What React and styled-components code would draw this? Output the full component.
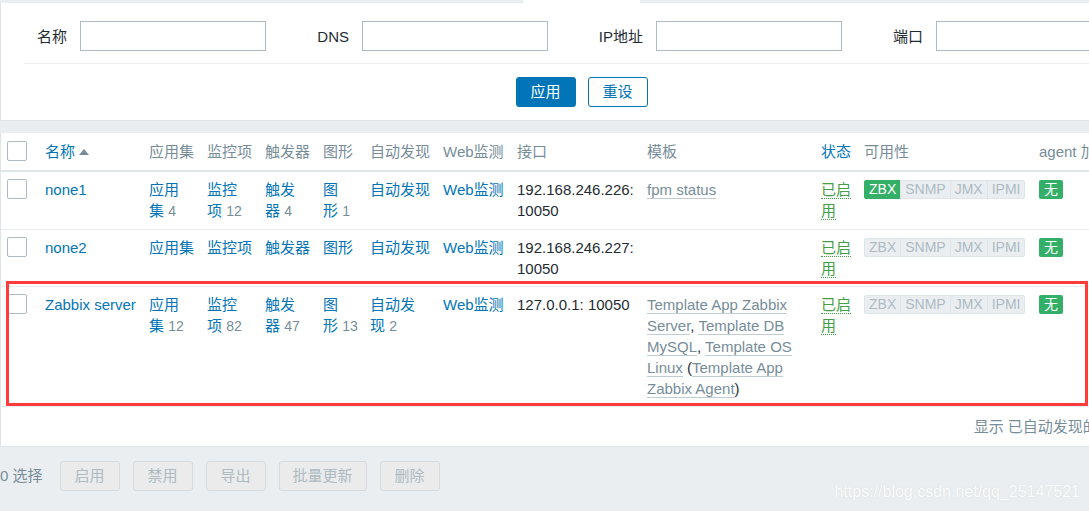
import React from 'react'
import styled, { createGlobalStyle, css } from 'styled-components'

const GlobalStyle = createGlobalStyle`
  html, body {
    margin: 0;
    padding: 0;
    overflow: hidden;
    background: #ebeef0;
  }
  body {
    font-family: "Liberation Sans", Arial, "Noto Sans CJK SC", sans-serif;
    font-size: 15px;
    color: #1f2c33;
  }
`

const BLUE = '#0275b8'
const GREY = '#768d99'
const DARK = '#1f2c33'
const GREEN = '#34af67'

const Page = styled.div`
  width: 1162px;
`

const TopStrip = styled.div`
  display: flex;
  height: 3px;
`

const StripGap = styled.div`
  width: ${(p) => p.$w}px;
`

const ActiveTab = styled.div`
  width: ${(p) => p.$w}px;
  background: #fff;
`

const FilterPanel = styled.div`
  background: #fff;
  border-left: 1px solid #dfe4e7;
  border-bottom: 1px solid #dfe4e7;
`

const FilterRow = styled.div`
  display: flex;
  margin-left: 23px;
  padding: 18px 0 12px;
  border-bottom: 1px solid #ebeef0;
`

const FilterField = styled.div`
  display: flex;
  align-items: center;
  flex: none;
`

const FieldLabel = styled.label`
  width: ${(p) => p.$w}px;
  box-sizing: border-box;
  padding-right: 13px;
  text-align: right;
  line-height: 21px;
  color: ${DARK};
  white-space: nowrap;
`

const TextInput = styled.input`
  width: 186px;
  height: 30px;
  box-sizing: border-box;
  border: 1px solid #acbbc4;
  background: #fff;
  margin: 0;
  padding: 0 6px;
  font: inherit;
`

const ButtonRow = styled.div`
  display: flex;
  justify-content: center;
  gap: 12px;
  padding: 13px 0;
`

const Button = styled.button`
  height: 30px;
  min-width: 60px;
  box-sizing: border-box;
  padding: 0 13px;
  border-radius: 3px;
  font-family: inherit;
  font-size: 15px;
  line-height: 28px;
  ${(p) =>
    p.$variant === 'primary' &&
    css`
      background: ${BLUE};
      border: 1px solid ${BLUE};
      color: #fff;
    `}
  ${(p) =>
    p.$variant === 'alt' &&
    css`
      background: #fff;
      border: 1px solid ${BLUE};
      color: ${BLUE};
    `}
  ${(p) =>
    p.$variant === 'disabled' &&
    css`
      background: #ebebeb;
      border: 1px solid #d5dbdf;
      color: #acbbc4;
    `}
`

const TableCard = styled.div`
  position: relative;
  margin-top: 12px;
  background: #fff;
  border-left: 1px solid #dfe4e7;
  border-bottom: 1px solid #dfe4e7;
`

const Table = styled.table`
  width: 1161px;
  table-layout: fixed;
  border-collapse: collapse;
`

const Col = styled.col`
  width: ${(p) => p.$w}px;
`

const Th = styled.th`
  padding: 8px 8px 8px ${(p) => (p.$first ? 6 : 0)}px;
  border-bottom: 2px solid #dfe4e7;
  font-weight: normal;
  text-align: left;
  vertical-align: top;
  line-height: 21px;
  color: ${(p) => (p.$link ? BLUE : GREY)};
  white-space: nowrap;
  overflow: hidden;
`

const Td = styled.td`
  padding: 7px 8px 7px ${(p) => (p.$first ? 6 : 0)}px;
  border-bottom: 1px solid #ebeef0;
  vertical-align: top;
  line-height: 21px;
  color: ${DARK};
`

const PagingCell = styled.td`
  padding: 9px 5px 9px 0;
  text-align: right;
  line-height: 21px;
  color: ${GREY};
  white-space: nowrap;
`

const SortArrow = styled.span`
  display: inline-block;
  margin-left: 4px;
  width: 0;
  height: 0;
  border-left: 5px solid transparent;
  border-right: 5px solid transparent;
  border-bottom: 6px solid ${GREY};
  vertical-align: 2px;
`

const Checkbox = styled.span`
  display: block;
  width: 20px;
  height: 20px;
  box-sizing: border-box;
  border: 1px solid #acbbc4;
  border-radius: 2px;
  background: #fff;
`

const Link = styled.a`
  color: ${BLUE};
  text-decoration: none;
`

const Count = styled.span`
  color: ${GREY};
  font-size: 14px;
`

const TemplateLink = styled.a`
  color: ${GREY};
  text-decoration: none;
  border-bottom: 1px solid rgba(118, 141, 153, 0.45);
`

const StatusLink = styled.a`
  color: #429e47;
  text-decoration: none;
  border-bottom: 1px dotted #429e47;
`

const Availability = styled.span`
  display: inline-flex;
  margin-top: 1px;
  vertical-align: top;
`

const Badge = styled.span`
  height: 19px;
  box-sizing: border-box;
  padding: 0 4px;
  font-size: 14px;
  line-height: 17px;
  border: 1px solid ${(p) => (p.$on ? GREEN : '#dfe4e7')};
  background: ${(p) => (p.$on ? GREEN : '#ebeef0')};
  color: ${(p) => (p.$on ? '#fff' : '#acbbc4')};
  & + & {
    margin-left: -1px;
  }
  &:first-child {
    border-radius: 2px 0 0 2px;
  }
  &:last-child {
    border-radius: 0 2px 2px 0;
  }
`

const EncBadge = styled.span`
  display: inline-block;
  margin-top: 1px;
  height: 19px;
  box-sizing: border-box;
  padding: 0 5px;
  border-radius: 2px;
  background: ${GREEN};
  color: #fff;
  font-size: 14px;
  line-height: 19px;
  vertical-align: top;
`

const Annotation = styled.div`
  position: absolute;
  left: 5px;
  top: 148px;
  width: 1082px;
  height: 125px;
  box-sizing: border-box;
  border: 3px solid #ff3b3b;
  pointer-events: none;
`

const ActionBar = styled.div`
  position: relative;
  display: flex;
  align-items: flex-start;
  padding-top: 14px;
  height: 64px;
  box-sizing: border-box;
`

const Selected = styled.span`
  color: ${GREY};
  line-height: 30px;
  margin-right: 17px;
`

const ActionButtons = styled.div`
  display: flex;
  gap: 13px;
`

const Watermark = styled.span`
  position: absolute;
  right: 82px;
  top: 36px;
  font-size: 16px;
  color: rgba(255, 255, 255, 0.95);
  text-shadow: 0 0 1px rgba(140, 150, 160, 0.3);
  white-space: nowrap;
`

const NB = '\u00a0'

const Entity = ({ label, count }) => (
  <>
    <Link href="#">{label}</Link>
    {count !== undefined && (
      <>
        {NB}
        <Count>{count}</Count>
      </>
    )}
  </>
)

const AvailabilityGroup = ({ zbx }) => (
  <Availability>
    <Badge $on={zbx}>ZBX</Badge>
    <Badge>SNMP</Badge>
    <Badge>JMX</Badge>
    <Badge>IPMI</Badge>
  </Availability>
)

const hosts = [
  {
    name: 'none1',
    counts: [4, 12, 4, 1],
    discovery: undefined,
    iface: '192.168.246.226: 10050',
    templates: 'fpm',
    zbx: true,
  },
  {
    name: 'none2',
    counts: [],
    discovery: undefined,
    iface: '192.168.246.227: 10050',
    templates: null,
    zbx: false,
  },
  {
    name: 'Zabbix server',
    counts: [12, 82, 47, 13],
    discovery: 2,
    iface: '127.0.0.1: 10050',
    templates: 'zabbix',
    zbx: false,
  },
]

const Templates = ({ kind }) => {
  if (kind === 'fpm') return <TemplateLink href="#">fpm status</TemplateLink>
  if (kind === 'zabbix')
    return (
      <>
        <TemplateLink href="#">Template App Zabbix Server</TemplateLink>,{' '}
        <TemplateLink href="#">Template DB MySQL</TemplateLink>,{' '}
        <TemplateLink href="#">Template OS Linux</TemplateLink> (
        <TemplateLink href="#">Template App Zabbix Agent</TemplateLink>)
      </>
    )
  return null
}

const colWidths = [44, 104, 58, 58, 58, 47, 73, 74, 130, 174, 43, 175, 90, 33]

export default function App() {
  return (
    <Page>
      <GlobalStyle />
      <TopStrip>
        <StripGap $w={523} />
        <ActiveTab $w={117} />
      </TopStrip>

      <FilterPanel>
        <FilterRow>
          <FilterField>
            <FieldLabel $w={56}>名称</FieldLabel>
            <TextInput />
          </FilterField>
          <FilterField>
            <FieldLabel $w={96}>DNS</FieldLabel>
            <TextInput />
          </FilterField>
          <FilterField>
            <FieldLabel $w={108}>IP地址</FieldLabel>
            <TextInput />
          </FilterField>
          <FilterField>
            <FieldLabel $w={94}>端口</FieldLabel>
            <TextInput />
          </FilterField>
        </FilterRow>
        <ButtonRow>
          <Button $variant="primary">应用</Button>
          <Button $variant="alt">重设</Button>
        </ButtonRow>
      </FilterPanel>

      <TableCard>
        <Table>
          <colgroup>
            {colWidths.map((w, i) => (
              <Col key={i} $w={w} />
            ))}
          </colgroup>
          <thead>
            <tr>
              <Th $first>
                <Checkbox />
              </Th>
              <Th $link>
                名称
                <SortArrow />
              </Th>
              <Th>应用集</Th>
              <Th>监控项</Th>
              <Th>触发器</Th>
              <Th>图形</Th>
              <Th>自动发现</Th>
              <Th>Web监测</Th>
              <Th>接口</Th>
              <Th>模板</Th>
              <Th $link>状态</Th>
              <Th>可用性</Th>
              <Th>agent 加密</Th>
              <Th>信息</Th>
            </tr>
          </thead>
          <tbody>
            {hosts.map((h) => (
              <tr key={h.name}>
                <Td $first>
                  <Checkbox />
                </Td>
                <Td>
                  <Link href="#">{h.name}</Link>
                </Td>
                <Td>
                  <Entity label="应用集" count={h.counts[0]} />
                </Td>
                <Td>
                  <Entity label="监控项" count={h.counts[1]} />
                </Td>
                <Td>
                  <Entity label="触发器" count={h.counts[2]} />
                </Td>
                <Td>
                  <Entity label="图形" count={h.counts[3]} />
                </Td>
                <Td>
                  <Entity label="自动发现" count={h.discovery} />
                </Td>
                <Td>
                  <Link href="#">Web监测</Link>
                </Td>
                <Td>{h.iface}</Td>
                <Td>
                  <Templates kind={h.templates} />
                </Td>
                <Td>
                  <StatusLink href="#">已启用</StatusLink>
                </Td>
                <Td>
                  <AvailabilityGroup zbx={h.zbx} />
                </Td>
                <Td>
                  <EncBadge>无</EncBadge>
                </Td>
                <Td />
              </tr>
            ))}
            <tr>
              <PagingCell colSpan={14}>显示 已自动发现的 3 中的 3</PagingCell>
            </tr>
          </tbody>
        </Table>
        <Annotation />
      </TableCard>

      <ActionBar>
        <Selected>0 选择</Selected>
        <ActionButtons>
          <Button $variant="disabled">启用</Button>
          <Button $variant="disabled">禁用</Button>
          <Button $variant="disabled">导出</Button>
          <Button $variant="disabled">批量更新</Button>
          <Button $variant="disabled">删除</Button>
        </ActionButtons>
        <Watermark>https://blog.csdn.net/qq_25147521</Watermark>
      </ActionBar>
    </Page>
  )
}
